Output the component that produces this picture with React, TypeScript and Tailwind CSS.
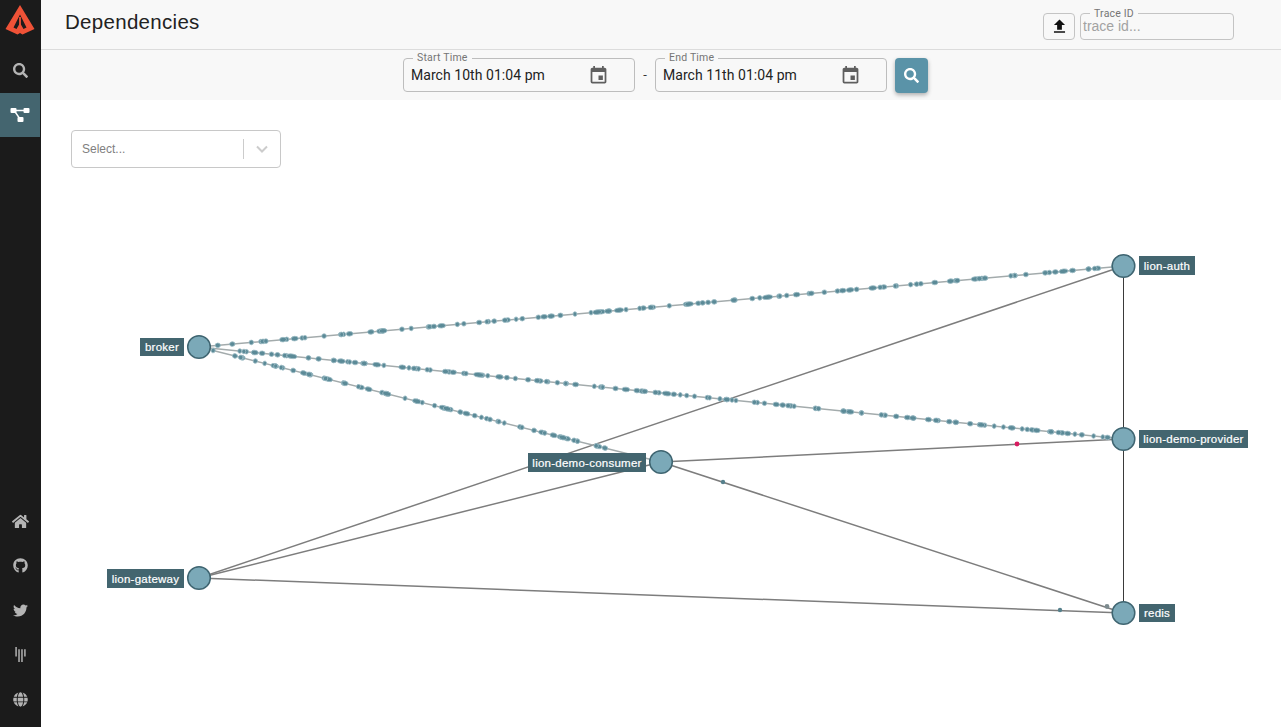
import React from 'react';
import { FaSearch, FaHome, FaGithub, FaTwitter, FaGitter, FaGlobe } from 'react-icons/fa';
import { MdEvent, MdFileUpload } from 'react-icons/md';

type Pt = [number, number];

const broker: Pt = [199, 347];
const auth: Pt = [1123.5, 266];
const provider: Pt = [1123.5, 439];
const consumer: Pt = [661, 462];
const gateway: Pt = [199, 578];
const redis: Pt = [1123.5, 613];

const nodes: { at: Pt; label: string; x: number; w: number; y: number; h: number }[] = [
  { at: broker, label: 'broker', x: 140, w: 44, y: 338, h: 18 },
  { at: auth, label: 'lion-auth', x: 1139, w: 56, y: 256, h: 19 },
  { at: provider, label: 'lion-demo-provider', x: 1139, w: 109, y: 430, h: 18 },
  { at: consumer, label: 'lion-demo-consumer', x: 528, w: 118, y: 453, h: 19 },
  { at: gateway, label: 'lion-gateway', x: 107, w: 77, y: 569, h: 19 },
  { at: redis, label: 'redis', x: 1139, w: 36, y: 604, h: 18 },
];

// Seeded so that the dots land on the same place every time
let seed = 1337;
const rnd = () => {
  seed = (seed * 16807) % 2147483647;
  return seed / 2147483647;
};

const traffic = (from: Pt, to: Pt, count: number, end = 0.98) => {
  const angle = (Math.atan2(to[1] - from[1], to[0] - from[0]) * 180) / Math.PI;
  return Array.from({ length: count }, (_, i) => {
    const t = 0.02 + ((i + rnd() * 3.5) / count) * (end - 0.02);
    return {
      x: from[0] + (to[0] - from[0]) * t,
      y: from[1] + (to[1] - from[1]) * t,
      rx: 1.9 + rnd() * rnd() * 3.4,
      angle,
    };
  });
};

const dots = [
  ...traffic(broker, auth, 105),
  ...traffic(broker, provider, 125),
  ...traffic(broker, consumer, 62, 0.87),
];

const SideItem = ({ children, active }: { children: React.ReactNode; active?: boolean }) => (
  <div className={`flex h-[44.5px] w-10 items-center justify-center ${active ? 'bg-[#44656f] text-white' : 'text-[#b4b4b4]'}`}>
    {children}
  </div>
);

const DateField = ({ label, value }: { label: string; value: string }) => (
  <div className="relative flex h-[34px] w-[232px] items-center rounded border border-[#bdbdbd] pl-[7px] pr-[25px]">
    <span className="absolute -top-[7px] left-[9px] bg-[#f8f8f8] px-1 text-[10.5px] leading-3 tracking-[0.2px] text-[#757575]">{label}</span>
    <span className="flex-1 text-[14px] tracking-[0.05px] text-[#222]">{value}</span>
    <MdEvent className="text-[#5f5f5f]" size={21} />
  </div>
);

export default function App() {
  return (
    <div className="flex h-screen w-full overflow-hidden bg-white font-['Roboto',sans-serif]">
      <aside className="flex w-[41px] shrink-0 flex-col justify-between bg-[#1b1b1b]">
        <div>
          <div className="flex h-[48px] w-10 items-start justify-center pt-[4px]">
            <svg width="30" height="32" viewBox="0 0 30 32">
              <path d="M15 1 L29.5 25 L17.5 30.5 L15 29 L12.5 30.5 L0.5 25 Z" fill="#ef5237" />
              <path d="M15 10.5 L8.5 23.5 L11.5 25 L15 19 L18.5 25 L21.5 23.5 Z" fill="#1b1b1b" />
              <path d="M15 13 L15 29" fill="none" stroke="#ef5237" strokeWidth="1.8" />
            </svg>
          </div>
          <SideItem>
            <FaSearch size={15} />
          </SideItem>
          <SideItem active>
            <svg width="20" height="16" viewBox="0 0 20 16" fill="#fff">
              <rect x="0.5" y="1" width="6" height="5" rx="1" />
              <rect x="13.5" y="1" width="6" height="5" rx="1" />
              <rect x="7.5" y="10" width="6" height="5" rx="1" />
              <path d="M5 3.5 H15 M4.5 4 L10 12" stroke="#fff" strokeWidth="1.4" fill="none" />
            </svg>
          </SideItem>
        </div>
        <div className="pb-[5.5px]">
          <SideItem>
            <FaHome size={17} />
          </SideItem>
          <SideItem>
            <FaGithub size={15} />
          </SideItem>
          <SideItem>
            <FaTwitter size={15} />
          </SideItem>
          <SideItem>
            <FaGitter size={15} />
          </SideItem>
          <SideItem>
            <FaGlobe size={15} />
          </SideItem>
        </div>
      </aside>

      <main className="flex min-w-0 flex-1 flex-col">
        <header className="flex h-[50px] shrink-0 items-center justify-between border-b border-[#dcdcdc] bg-[#f8f8f8] pl-6 pr-[47px]">
          <h1 className="-mt-[5px] font-['Liberation_Sans',sans-serif] text-[20.5px] tracking-[0.3px] text-[#222]">Dependencies</h1>
          <div className="flex items-center gap-[5px] pt-[3px]">
            <button className="flex h-[27px] w-8 items-center justify-center rounded border border-[#c4c4c4] text-[#111]">
              <MdFileUpload size={19} />
            </button>
            <div className="relative flex h-[27px] w-[154px] items-center rounded border border-[#c4c4c4] pl-[2px]">
              <span className="absolute -top-[6px] left-[9px] bg-[#f8f8f8] px-1 text-[10.5px] leading-3 tracking-[0.2px] text-[#757575]">Trace ID</span>
              <span className="font-['Liberation_Sans',sans-serif] text-[14px] text-[#a2a2a2]">trace id...</span>
            </div>
          </div>
        </header>

        <div className="flex h-[50px] shrink-0 items-center justify-center bg-[#f8f8f8] pl-[9px]">
          <DateField label="Start Time" value="March 10th 01:04 pm" />
          <span className="w-[20px] text-center text-[13px] text-[#333]">-</span>
          <DateField label="End Time" value="March 11th 01:04 pm" />
          <button className="ml-[8px] flex h-[35px] w-[33px] items-center justify-center rounded bg-[#5a93a8] text-white shadow-[0_2px_4px_rgba(0,0,0,0.3)]">
            <FaSearch size={15} />
          </button>
        </div>

        <section className="relative flex-1 bg-white pl-[30px] pt-[30px]">
          <div className="flex h-[38px] w-[210px] items-center rounded border border-[#c8c8c8] bg-white pl-[10px] font-['Liberation_Sans',sans-serif]">
            <span className="w-[161px] text-[12px] text-[#808080]">Select...</span>
            <span className="h-[20px] w-px bg-[#cccccc]" />
            <svg className="ml-[11px]" width="14" height="10" viewBox="0 0 14 10">
              <path d="M2 2.5 L7 7.5 L12 2.5" fill="none" stroke="#cccccc" strokeWidth="2" />
            </svg>
          </div>

          <svg className="absolute left-0 top-0 font-['Liberation_Sans',sans-serif]" width="1240" height="627" viewBox="41 100 1240 627">
            <g strokeWidth="1.5" fill="none">
              <line x1={gateway[0]} y1={gateway[1]} x2={auth[0]} y2={auth[1]} stroke="#7d7d7d" />
              <line x1={gateway[0]} y1={gateway[1]} x2={consumer[0]} y2={consumer[1]} stroke="#7d7d7d" />
              <line x1={gateway[0]} y1={gateway[1]} x2={redis[0]} y2={redis[1]} stroke="#7d7d7d" />
              <line x1={consumer[0]} y1={consumer[1]} x2={provider[0]} y2={provider[1]} stroke="#7d7d7d" />
              <line x1={consumer[0]} y1={consumer[1]} x2={redis[0]} y2={redis[1]} stroke="#7d7d7d" />
              <line x1={broker[0]} y1={broker[1]} x2={auth[0]} y2={auth[1]} stroke="#a3abac" />
              <line x1={broker[0]} y1={broker[1]} x2={provider[0]} y2={provider[1]} stroke="#a3abac" />
              <line x1={broker[0]} y1={broker[1]} x2={consumer[0]} y2={consumer[1]} stroke="#a3abac" />
              <line x1={auth[0]} y1={auth[1]} x2={redis[0]} y2={redis[1]} stroke="#3a3a3a" strokeWidth="1" />
            </g>

            {dots.map((d, i) => (
              <ellipse
                key={i}
                cx={d.x}
                cy={d.y}
                rx={d.rx}
                ry={2.3}
                transform={`rotate(${d.angle} ${d.x} ${d.y})`}
                fill="#5b8a97"
                stroke="#9dbcc5"
                strokeWidth="0.8"
              />
            ))}
            <circle cx="1017" cy="444" r="2.4" fill="#d81b60" />
            <circle cx="723" cy="482" r="2.2" fill="#56808c" />
            <circle cx="1060" cy="610" r="2.2" fill="#56808c" />
            <circle cx="1107" cy="606.5" r="2.4" fill="#7d8b8f" />

            {nodes.map((n) => (
              <g key={n.label}>
                <circle cx={n.at[0]} cy={n.at[1]} r="11.3" fill="#7ba9b8" stroke="#3f6571" strokeWidth="1.5" />
                <rect x={n.x} y={n.y} width={n.w} height={n.h} fill="#43656f" />
                <text x={n.x + n.w / 2} y={n.y + n.h / 2 + 4} textAnchor="middle" fontSize="11.5" letterSpacing="0.25" fill="#ffffff" stroke="#ffffff" strokeWidth="0.2">
                  {n.label}
                </text>
              </g>
            ))}
          </svg>
        </section>
      </main>
    </div>
  );
}
